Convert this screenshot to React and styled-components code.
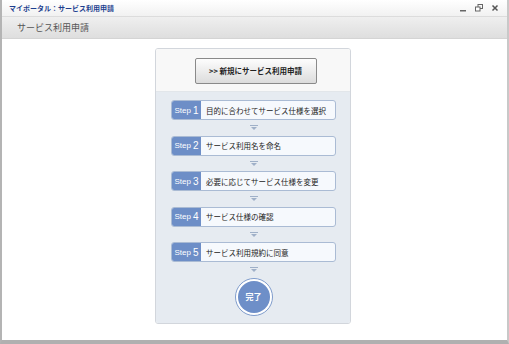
import React from "react";
import styled, { createGlobalStyle } from "styled-components";

const Global = createGlobalStyle`
	html, body {
		margin: 0;
		padding: 0;
		background: #fff;
	}
	body {
		font-family: "Noto Sans CJK JP", "Liberation Sans", sans-serif;
	}
`;

const steps = [
	"目的に合わせてサービス仕様を選択",
	"サービス利用名を命名",
	"必要に応じてサービス仕様を変更",
	"サービス仕様の確認",
	"サービス利用規約に同意",
];

const App = () => {
	return (
		<>
			<Global />
			<Window>
				<TitleBar>
					<Title>マイポータル：サービス利用申請</Title>
					<Controls>
						<svg width="8" height="8" viewBox="0 0 8 8">
							<rect x="1" y="6" width="6" height="1.5" fill="#666" />
						</svg>
						<svg width="8" height="8" viewBox="0 0 8 8">
							<rect x="3" y="0.5" width="4.5" height="4" fill="none" stroke="#666" strokeWidth="1" />
							<rect x="0.5" y="3" width="4.5" height="4" fill="#fff" stroke="#666" strokeWidth="1" />
						</svg>
						<svg width="8" height="8" viewBox="0 0 8 8">
							<path d="M1.5 1.5 L6.5 6.5 M6.5 1.5 L1.5 6.5" stroke="#555" strokeWidth="1.5" />
						</svg>
					</Controls>
				</TitleBar>
				<Header>サービス利用申請</Header>
				<Content>
					<Panel>
						<PanelTop>
							<NewButton>&gt;&gt; 新規にサービス利用申請</NewButton>
						</PanelTop>
						<PanelBody>
							{steps.map((s, i) => (
								<React.Fragment key={i}>
									<StepRow>
										<StepLabel>
											Step<Num>{i + 1}</Num>
										</StepLabel>
										<StepText>{s}</StepText>
									</StepRow>
									<Arrow>
										<svg width="8" height="5" viewBox="0 0 8 5">
											<rect x="0" y="0" width="8" height="1" fill="#9fb0c8" />
											<path d="M1 2 L7 2 L4 5 Z" fill="#9fb0c8" />
										</svg>
									</Arrow>
								</React.Fragment>
							))}
							<Done>
								<DoneInner>完了</DoneInner>
							</Done>
						</PanelBody>
					</Panel>
				</Content>
			</Window>
		</>
	);
};

const Window = styled.div`
	width: 509px;
	height: 344px;
	box-sizing: border-box;
	border-left: 2px solid #b4b4b4;
	border-right: 2px solid #c8c8c8;
	border-bottom: 4px solid #b0b0b0;
	display: flex;
	flex-direction: column;
	background: #fff;
`;

const TitleBar = styled.div`
	height: 16px;
	display: flex;
	align-items: center;
	justify-content: space-between;
	padding: 0 8px 0 7px;
	background: linear-gradient(#ffffff, #f1f1f1);
	border-bottom: 1px solid #dcdcdc;
`;

const Title = styled.div`
	font-size: 7px;
	font-weight: bold;
	color: #1d3f8f;
`;

const Controls = styled.div`
	display: flex;
	gap: 8px;
	align-items: center;
`;

const Header = styled.div`
	height: 21px;
	display: flex;
	align-items: center;
	padding-left: 15px;
	font-size: 9px;
	color: #555;
	background: linear-gradient(#efefef, #dedede);
	border-bottom: 1px solid #d4d4d4;
`;

const Content = styled.div`
	flex: 1;
	display: flex;
	justify-content: center;
	padding-top: 9px;
	padding-right: 4px;
`;

const Panel = styled.div`
	width: 196px;
	height: 276px;
	box-sizing: border-box;
	border: 1px solid #d2d6dc;
	border-radius: 3px;
	display: flex;
	flex-direction: column;
	overflow: hidden;
`;

const PanelTop = styled.div`
	height: 41px;
	background: #f8f8f8;
	border-bottom: 1px solid #e2e6ea;
	display: flex;
	justify-content: center;
	align-items: center;
	padding-left: 6px;
	padding-top: 1px;
`;

const NewButton = styled.div`
	width: 122px;
	height: 26px;
	box-sizing: border-box;
	border: 1px solid #8a8a8a;
	border-radius: 2px;
	background: linear-gradient(#fdfdfd, #dcdcdc);
	display: flex;
	align-items: center;
	justify-content: center;
	font-size: 7.5px;
	font-weight: bold;
	color: #222;
`;

const PanelBody = styled.div`
	flex: 1;
	background: #e6ebf1;
	display: flex;
	flex-direction: column;
	align-items: center;
	padding-top: 8px;
	padding-left: 2px;
`;

const StepRow = styled.div`
	width: 165px;
	height: 20px;
	box-sizing: border-box;
	border: 1px solid #aabbd4;
	border-radius: 3px;
	background: #f6f9fd;
	display: flex;
	overflow: hidden;
`;

const StepLabel = styled.div`
	width: 29px;
	background: #6d8ec7;
	color: #fff;
	font-family: "Liberation Sans", sans-serif;
	font-size: 8px;
	display: flex;
	align-items: center;
	justify-content: center;
`;

const Num = styled.span`
	font-size: 10px;
	margin-left: 2px;
`;

const StepText = styled.div`
	flex: 1;
	display: flex;
	align-items: center;
	padding-left: 5px;
	font-size: 7.5px;
	color: #222;
	white-space: nowrap;
`;

const Arrow = styled.div`
	height: 15.5px;
	display: flex;
	align-items: center;
	justify-content: center;
`;

const Done = styled.div`
	width: 38px;
	height: 38px;
	box-sizing: border-box;
	border-radius: 50%;
	border: 1px solid #7f9ccc;
	background: #fff;
	display: flex;
	align-items: center;
	justify-content: center;
`;

const DoneInner = styled.div`
	width: 32px;
	height: 32px;
	border-radius: 50%;
	background: #6e8fc8;
	color: #fff;
	font-size: 8px;
	font-weight: bold;
	display: flex;
	align-items: center;
	justify-content: center;
`;

export default App;
